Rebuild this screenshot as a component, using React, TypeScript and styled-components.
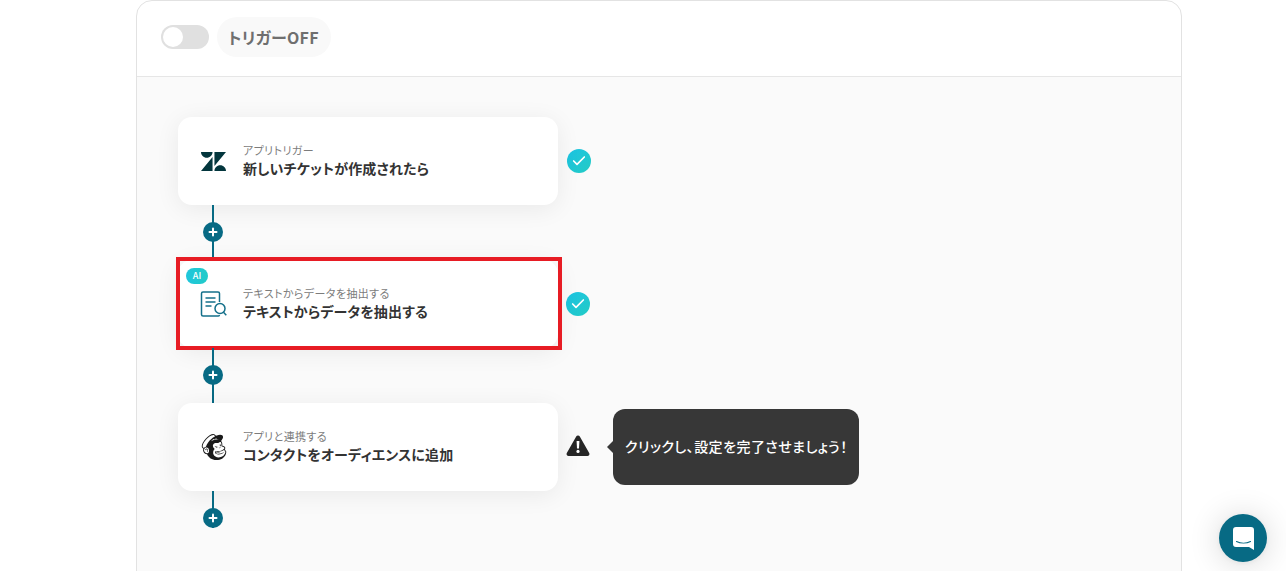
import React from "react";
import styled, { createGlobalStyle } from "styled-components";
import { Check, Plus } from "lucide-react";
import { SiMailchimp } from "react-icons/si";

const GlobalStyle = createGlobalStyle`
  html, body {
    margin: 0;
    height: 100%;
    overflow: hidden;
    background: #fff;
    font-family: "Noto Sans CJK JP", "Noto Sans", sans-serif;
    font-feature-settings: "palt";
  }
`;

const Page = styled.div`
  display: flex;
  justify-content: flex-start;
  height: 571px;
  padding-left: 136px;
  overflow: hidden;
`;

const Panel = styled.section`
  width: 1046px;
  height: 640px;
  box-sizing: border-box;
  flex-shrink: 0;
  background: #fff;
  border: 1px solid #e2e2e2;
  border-radius: 16px;
  overflow: hidden;
`;

const Header = styled.header`
  display: flex;
  align-items: center;
  gap: 8px;
  height: 76px;
  box-sizing: border-box;
  padding: 0 24px 4px;
  border-bottom: 1px solid #e6e6e6;
`;

const Toggle = styled.div`
  display: flex;
  align-items: center;
  width: 48px;
  height: 24px;
  box-sizing: border-box;
  padding-left: 2px;
  border-radius: 12px;
  background: #e0e0e0;
`;

const Knob = styled.span`
  width: 20px;
  height: 20px;
  border-radius: 50%;
  background: #fff;
`;

const TriggerChip = styled.div`
  display: flex;
  align-items: center;
  height: 40px;
  padding: 0 12px 0 11px;
  border-radius: 20px;
  background: #f9f9f9;
  color: #6f6f6f;
  font-size: 16px;
  font-weight: 700;
  letter-spacing: 0.3px;
`;

const Canvas = styled.div`
  display: flex;
  flex-direction: column;
  height: 100%;
  padding: 40px 0 0 41px;
  background: #fafafa;
`;

const StepRow = styled.div`
  display: flex;
  align-items: center;
`;

const Card = styled.div`
  position: relative;
  display: flex;
  align-items: center;
  gap: 16px;
  width: 380px;
  height: 88px;
  box-sizing: border-box;
  padding: 0 22px;
  border-radius: 14px;
  background: #fff;
  box-shadow: 0 4px 24px rgba(0, 0, 0, 0.07);
`;

const Highlight = styled.span`
  position: absolute;
  top: -3px;
  left: -2px;
  right: -4px;
  bottom: -2px;
  border: 4px solid #e71c24;
  pointer-events: none;
`;

const AiBadge = styled.span`
  position: absolute;
  top: 8px;
  left: 8px;
  width: 22px;
  height: 16px;
  border-radius: 8px;
  background: linear-gradient(90deg, #1fc6dc, #22cbc8);
  color: #fff;
  font-size: 9px;
  font-weight: 500;
  line-height: 16px;
  text-align: center;
`;

const IconBox = styled.div`
  display: flex;
  align-items: center;
  justify-content: center;
  width: 27px;
  flex-shrink: 0;
`;

const CardText = styled.div`
  display: flex;
  flex-direction: column;
  margin-top: -3px;
`;

const CardLabel = styled.span`
  color: #7c7c7c;
  font-size: 11px;
  letter-spacing: 0.4px;
  line-height: 16px;
`;

const CardTitle = styled.span`
  color: #333;
  font-size: 14px;
  font-weight: 700;
  letter-spacing: 0.15px;
  line-height: 20px;
`;

const StatusCheck = styled.span<{ $gap: number }>`
  display: flex;
  align-items: center;
  justify-content: center;
  width: 24px;
  height: 24px;
  margin-left: ${(props) => props.$gap}px;
  border-radius: 50%;
  background: linear-gradient(135deg, #1cc4e4, #23cbc4);
  color: #fff;
`;

const WarningBox = styled.span`
  display: flex;
  width: 24px;
  height: 24px;
  margin: -4px 0 0 8px;
`;

const Tooltip = styled.div`
  position: relative;
  display: flex;
  align-items: center;
  width: 246px;
  height: 76px;
  box-sizing: border-box;
  margin-left: 23px;
  padding: 0 0 2px 12px;
  border-radius: 12px;
  background: #373737;
  color: #fff;
  font-size: 14px;
  font-weight: 500;
  letter-spacing: 0.45px;

  &:before {
    content: "";
    position: absolute;
    left: -6px;
    top: 32px;
    width: 0;
    height: 0;
    border-top: 6px solid transparent;
    border-bottom: 6px solid transparent;
    border-right: 6px solid #373737;
  }
`;

const Connector = styled.div<{ $height: number }>`
  position: relative;
  display: flex;
  justify-content: center;
  width: 20px;
  height: ${(props) => props.$height}px;
  margin-left: 25px;

  &:before {
    content: "";
    width: 2px;
    height: 100%;
    background: #076a84;
  }
`;

const AddButton = styled.span`
  position: absolute;
  top: 17px;
  left: 0;
  display: flex;
  align-items: center;
  justify-content: center;
  width: 20px;
  height: 20px;
  border-radius: 50%;
  background: #076a84;
  color: #fff;
`;

const ChatButton = styled.button`
  position: fixed;
  right: 19px;
  bottom: 9px;
  display: flex;
  align-items: center;
  justify-content: center;
  width: 48px;
  height: 48px;
  padding: 0;
  border: 0;
  border-radius: 50%;
  background: #076a84;
  box-shadow: 0 1px 6px rgba(0, 0, 0, 0.06), 0 2px 32px rgba(0, 0, 0, 0.16);
`;

const ZendeskIcon = () => (
  <svg width="25" height="25" viewBox="0 0 24 24" fill="#03363d">
    <path d="M12.914 2.904V16.29L24 2.905H12.914zM0 2.906C0 5.966 2.483 8.45 5.543 8.45s5.542-2.484 5.543-5.544H0zm11.086 4.807L0 21.096h11.086V7.713zm7.37 7.84c-3.063 0-5.542 2.48-5.542 5.543H24c0-3.06-2.48-5.543-5.543-5.543z" />
  </svg>
);

const ExtractIcon = () => (
  <svg width="27" height="28" viewBox="0 0 27 28" fill="none" stroke="#14708a" strokeWidth="1.5">
    <path d="M19.500 12V3.500A1.500 1.500 0 0 0 18 2H3A1.500 1.500 0 0 0 1.500 3.500v21A1.500 1.500 0 0 0 3 26h15a1.500 1.500 0 0 0 1.500-1" />
    <path d="M5.500 8h10M5.500 12h10M5.500 16h6" />
    <circle cx="20" cy="18.500" r="5" />
    <path d="M23.500 22.200l2.800 3" />
  </svg>
);

const WarningIcon = () => (
  <svg width="24" height="24" viewBox="0 0 24 24">
    <path
      d="M12 2.4c.8 0 1.4.4 1.8 1.1l9.4 16.6c.8 1.4-.2 3-1.8 3H2.6c-1.6 0-2.6-1.6-1.8-3l9.4-16.6c.4-.7 1-1.1 1.8-1.1z"
      fill="#262626"
    />
    <path d="M10.6 8h2.8l-.4 7.6h-2z" fill="#fff" />
    <circle cx="12" cy="18.4" r="1.6" fill="#fff" />
  </svg>
);

const MessengerIcon = () => (
  <svg width="21" height="23" viewBox="0 0 21 23">
    <path
      d="M3 0h15a3 3 0 0 1 3 3v20l-5-3H3a3 3 0 0 1-3-3V3a3 3 0 0 1 3-3z"
      fill="#fff"
    />
    <path d="M3.500 14.500c4 2 10 2 14 0" fill="none" stroke="#076a84" strokeWidth="1.100" strokeLinecap="round" />
  </svg>
);

const Add = ({ last }: { last?: boolean }) => (
  <Connector $height={last ? 37 : 55}>
    <AddButton>
      <Plus size={12} strokeWidth={4} />
    </AddButton>
  </Connector>
);

const App = () => (
  <>
    <GlobalStyle />
    <Page>
      <Panel>
        <Header>
          <Toggle>
            <Knob />
          </Toggle>
          <TriggerChip>トリガーOFF</TriggerChip>
        </Header>
        <Canvas>
          <StepRow>
            <Card>
              <IconBox>
                <ZendeskIcon />
              </IconBox>
              <CardText>
                <CardLabel>アプリトリガー</CardLabel>
                <CardTitle>新しいチケットが作成されたら</CardTitle>
              </CardText>
            </Card>
            <StatusCheck $gap={9}>
              <Check size={16} strokeWidth={2.5} />
            </StatusCheck>
          </StepRow>
          <Add />
          <StepRow>
            <Card>
              <Highlight />
              <AiBadge>AI</AiBadge>
              <IconBox>
                <ExtractIcon />
              </IconBox>
              <CardText>
                <CardLabel>テキストからデータを抽出する</CardLabel>
                <CardTitle>テキストからデータを抽出する</CardTitle>
              </CardText>
            </Card>
            <StatusCheck $gap={8}>
              <Check size={16} strokeWidth={2.5} />
            </StatusCheck>
          </StepRow>
          <Add />
          <StepRow>
            <Card>
              <IconBox>
                <SiMailchimp size={26} color="#1a1a1a" />
              </IconBox>
              <CardText>
                <CardLabel>アプリと連携する</CardLabel>
                <CardTitle>コンタクトをオーディエンスに追加</CardTitle>
              </CardText>
            </Card>
            <WarningBox>
              <WarningIcon />
            </WarningBox>
            <Tooltip>クリックし、設定を完了させましょう！</Tooltip>
          </StepRow>
          <Add last />
        </Canvas>
      </Panel>
    </Page>
    <ChatButton aria-label="チャット">
      <MessengerIcon />
    </ChatButton>
  </>
);

export default App;
